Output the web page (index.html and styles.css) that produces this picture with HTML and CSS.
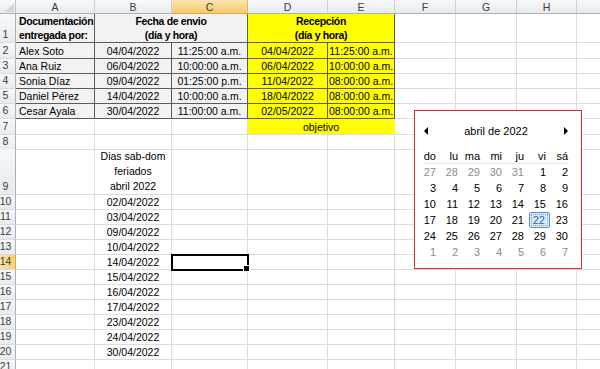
FILE: index.html
```html
<!doctype html>
<html lang="es">
<head>
    <meta charset="UTF-8">
    <title>Documentación - fechas de envío y recepción</title>
    <link rel="stylesheet" href="styles.css">
</head>
<body>
    <div class="sheet">
        <div class="row head">
            <div class="corner"></div>
            <div class="col">A</div>
            <div class="col">B</div>
            <div class="col active">C</div>
            <div class="col">D</div>
            <div class="col">E</div>
            <div class="col">F</div>
            <div class="col">G</div>
            <div class="col">H</div>
            <div class="col"></div>
        </div>

        <div class="row r1">
            <div class="num">1</div>
            <div class="cell tb gray bold left">Documentación<br>entregada por:</div>
            <div class="cell tb gray bold span2">Fecha de envio<br>(día y hora)</div>
            <div class="cell tb yellow bold span2">Recepción<br>(día y hora)</div>
            <div class="cell"></div>
            <div class="cell"></div>
            <div class="cell"></div>
            <div class="cell"></div>
        </div>
        <div class="row r2">
            <div class="num">2</div>
            <div class="cell tb gray left">Alex Soto</div>
            <div class="cell tb gray">04/04/2022</div>
            <div class="cell tb gray">11:25:00 a.m.</div>
            <div class="cell tb yellow">04/04/2022</div>
            <div class="cell tb yellow">11:25:00 a.m.</div>
            <div class="cell"></div>
            <div class="cell"></div>
            <div class="cell"></div>
            <div class="cell"></div>
        </div>
        <div class="row">
            <div class="num">3</div>
            <div class="cell tb gray left">Ana Ruiz</div>
            <div class="cell tb gray">06/04/2022</div>
            <div class="cell tb gray">10:00:00 a.m.</div>
            <div class="cell tb yellow">06/04/2022</div>
            <div class="cell tb yellow">10:00:00 a.m.</div>
            <div class="cell"></div>
            <div class="cell"></div>
            <div class="cell"></div>
            <div class="cell"></div>
        </div>
        <div class="row">
            <div class="num">4</div>
            <div class="cell tb gray left">Sonia Díaz</div>
            <div class="cell tb gray">09/04/2022</div>
            <div class="cell tb gray">01:25:00 p.m.</div>
            <div class="cell tb yellow">11/04/2022</div>
            <div class="cell tb yellow">08:00:00 a.m.</div>
            <div class="cell"></div>
            <div class="cell"></div>
            <div class="cell"></div>
            <div class="cell"></div>
        </div>
        <div class="row">
            <div class="num">5</div>
            <div class="cell tb gray left">Daniel Pérez</div>
            <div class="cell tb gray">14/04/2022</div>
            <div class="cell tb gray">10:00:00 a.m.</div>
            <div class="cell tb yellow">18/04/2022</div>
            <div class="cell tb yellow">08:00:00 a.m.</div>
            <div class="cell"></div>
            <div class="cell"></div>
            <div class="cell"></div>
            <div class="cell"></div>
        </div>
        <div class="row">
            <div class="num">6</div>
            <div class="cell tb gray left">Cesar Ayala</div>
            <div class="cell tb gray">30/04/2022</div>
            <div class="cell tb gray">11:00:00 a.m.</div>
            <div class="cell tb yellow">02/05/2022</div>
            <div class="cell tb yellow">08:00:00 a.m.</div>
            <div class="cell"></div>
            <div class="cell"></div>
            <div class="cell"></div>
            <div class="cell"></div>
        </div>
        <div class="row r7">
            <div class="num">7</div>
            <div class="cell"></div>
            <div class="cell"></div>
            <div class="cell"></div>
            <div class="cell yellow flat span2">objetivo</div>
            <div class="cell"></div>
            <div class="cell"></div>
            <div class="cell"></div>
            <div class="cell"></div>
        </div>
        <div class="row r8">
            <div class="num">8</div>
            <div class="cell"></div>
            <div class="cell"></div>
            <div class="cell"></div>
            <div class="cell"></div>
            <div class="cell"></div>
            <div class="cell"></div>
            <div class="cell"></div>
            <div class="cell"></div>
            <div class="cell"></div>
        </div>
        <div class="row r9">
            <div class="num">9</div>
            <div class="cell"></div>
            <div class="cell tall">Dias sab-dom<br>feriados<br>abril 2022</div>
            <div class="cell"></div>
            <div class="cell"></div>
            <div class="cell"></div>
            <div class="cell"></div>
            <div class="cell"></div>
            <div class="cell"></div>
            <div class="cell"></div>
        </div>
        <div class="row">
            <div class="num">10</div>
            <div class="cell"></div>
            <div class="cell">02/04/2022</div>
            <div class="cell"></div>
            <div class="cell"></div>
            <div class="cell"></div>
            <div class="cell"></div>
            <div class="cell"></div>
            <div class="cell"></div>
            <div class="cell"></div>
        </div>
        <div class="row">
            <div class="num">11</div>
            <div class="cell"></div>
            <div class="cell">03/04/2022</div>
            <div class="cell"></div>
            <div class="cell"></div>
            <div class="cell"></div>
            <div class="cell"></div>
            <div class="cell"></div>
            <div class="cell"></div>
            <div class="cell"></div>
        </div>
        <div class="row">
            <div class="num">12</div>
            <div class="cell"></div>
            <div class="cell">09/04/2022</div>
            <div class="cell"></div>
            <div class="cell"></div>
            <div class="cell"></div>
            <div class="cell"></div>
            <div class="cell"></div>
            <div class="cell"></div>
            <div class="cell"></div>
        </div>
        <div class="row">
            <div class="num">13</div>
            <div class="cell"></div>
            <div class="cell">10/04/2022</div>
            <div class="cell"></div>
            <div class="cell"></div>
            <div class="cell"></div>
            <div class="cell"></div>
            <div class="cell"></div>
            <div class="cell"></div>
            <div class="cell"></div>
        </div>
        <div class="row">
            <div class="num active">14</div>
            <div class="cell"></div>
            <div class="cell">14/04/2022</div>
            <div class="cell selected"></div>
            <div class="cell"></div>
            <div class="cell"></div>
            <div class="cell"></div>
            <div class="cell"></div>
            <div class="cell"></div>
            <div class="cell"></div>
        </div>
        <div class="row">
            <div class="num">15</div>
            <div class="cell"></div>
            <div class="cell">15/04/2022</div>
            <div class="cell"></div>
            <div class="cell"></div>
            <div class="cell"></div>
            <div class="cell"></div>
            <div class="cell"></div>
            <div class="cell"></div>
            <div class="cell"></div>
        </div>
        <div class="row">
            <div class="num">16</div>
            <div class="cell"></div>
            <div class="cell">16/04/2022</div>
            <div class="cell"></div>
            <div class="cell"></div>
            <div class="cell"></div>
            <div class="cell"></div>
            <div class="cell"></div>
            <div class="cell"></div>
            <div class="cell"></div>
        </div>
        <div class="row">
            <div class="num">17</div>
            <div class="cell"></div>
            <div class="cell">17/04/2022</div>
            <div class="cell"></div>
            <div class="cell"></div>
            <div class="cell"></div>
            <div class="cell"></div>
            <div class="cell"></div>
            <div class="cell"></div>
            <div class="cell"></div>
        </div>
        <div class="row">
            <div class="num">18</div>
            <div class="cell"></div>
            <div class="cell">23/04/2022</div>
            <div class="cell"></div>
            <div class="cell"></div>
            <div class="cell"></div>
            <div class="cell"></div>
            <div class="cell"></div>
            <div class="cell"></div>
            <div class="cell"></div>
        </div>
        <div class="row">
            <div class="num">19</div>
            <div class="cell"></div>
            <div class="cell">24/04/2022</div>
            <div class="cell"></div>
            <div class="cell"></div>
            <div class="cell"></div>
            <div class="cell"></div>
            <div class="cell"></div>
            <div class="cell"></div>
            <div class="cell"></div>
        </div>
        <div class="row">
            <div class="num">20</div>
            <div class="cell"></div>
            <div class="cell">30/04/2022</div>
            <div class="cell"></div>
            <div class="cell"></div>
            <div class="cell"></div>
            <div class="cell"></div>
            <div class="cell"></div>
            <div class="cell"></div>
            <div class="cell"></div>
        </div>
        <div class="row">
            <div class="num">21</div>
            <div class="cell"></div>
            <div class="cell"></div>
            <div class="cell"></div>
            <div class="cell"></div>
            <div class="cell"></div>
            <div class="cell"></div>
            <div class="cell"></div>
            <div class="cell"></div>
            <div class="cell"></div>
        </div>
    </div>

    <!-- selector de fecha flotante sobre la hoja -->
    <div class="picker">
        <div class="picker-title">
            <span class="arrow prev"></span>
            <span class="month">abril de 2022</span>
            <span class="arrow next"></span>
        </div>
        <div class="week">
            <div>do</div><div>lu</div><div>ma</div><div>mi</div><div>ju</div><div>vi</div><div>sá</div>
        </div>
        <div class="days">
            <div class="out">27</div><div class="out">28</div><div class="out">29</div><div class="out">30</div><div class="out">31</div><div>1</div><div>2</div>
            <div>3</div><div>4</div><div>5</div><div>6</div><div>7</div><div>8</div><div>9</div>
            <div>10</div><div>11</div><div>12</div><div>13</div><div>14</div><div>15</div><div>16</div>
            <div>17</div><div>18</div><div>19</div><div>20</div><div>21</div><div class="today">22</div><div>23</div>
            <div>24</div><div>25</div><div>26</div><div>27</div><div>28</div><div>29</div><div>30</div>
            <div class="out">1</div><div class="out">2</div><div class="out">3</div><div class="out">4</div><div class="out">5</div><div class="out">6</div><div class="out">7</div>
        </div>
    </div>
</body>
</html>
```

FILE: styles.css
```css
* {
    box-sizing: border-box;
}
body {
    margin: 0;
    width: 600px;
    height: 369px;
    overflow: hidden;
    position: relative;
    background: #fff;
    font-family: "Liberation Sans", Arial, sans-serif;
    font-size: 10.5px;
    color: #000;
}
.sheet {
    width: 637px;
}
.row {
    display: grid;
    grid-template-columns: 16px 79px 77px 76px 80px 67px 61px 61px 60px 60px;
    height: 15px;
}
.head { height: 14px; }
.r1 { height: 29px; }
.r2, .r7 { height: 16px; }
.r8 { height: 14px; }
.r9 { height: 46px; }

/* cabeceras */
.corner, .col, .num {
    background: linear-gradient(#f7f8fa, #e8ebef);
    color: #3c3c3c;
}
.corner {
    border-right: 1px solid #bcc3cc;
    border-bottom: 1px solid #a9b1bb;
    display: flex;
    align-items: flex-end;
    justify-content: flex-end;
    padding: 0 1px 1px 0;
}
.corner::after {
    content: "";
    border-left: 9px solid transparent;
    border-bottom: 9px solid #d3d7dc;
}
.col {
    border-right: 1px solid #ccd1d7;
    border-bottom: 1px solid #a9b1bb;
    display: flex;
    align-items: center;
    justify-content: center;
}
.col.active {
    background: linear-gradient(#fbe7b0, #f6c96a);
    border-bottom-color: #e8a33a;
    border-right-color: #e2b66c;
}
.num {
    border-right: 1px solid #a9b1bb;
    border-bottom: 1px solid #d8dce2;
    display: flex;
    align-items: flex-end;
    justify-content: center;
    padding: 0 4px 1px 0;
    line-height: 13px;
}
.num.active {
    background: linear-gradient(90deg, #fbe3a4, #f7cf78);
    border-right-color: #e8a33a;
}

/* celdas */
.cell {
    border-right: 1px solid #dcdcdc;
    border-bottom: 1px solid #dcdcdc;
    display: flex;
    align-items: flex-end;
    justify-content: center;
    text-align: center;
    padding: 0 3px 0;
    line-height: 14px;
    white-space: nowrap;
    overflow: hidden;
}
.span2 {
    grid-column: span 2;
}
.left {
    justify-content: flex-start;
    text-align: left;
}
.bold {
    font-weight: bold;
    letter-spacing: -0.35px;
}
.tb {
    border-color: #5c5c5c;
}
.gray {
    background: #f2f2f2;
}
.yellow {
    background: #ffff00;
}
.flat {
    border-right-color: #ffff00;
}
.tall {
    line-height: 15px;
}
.selected {
    position: relative;
    overflow: visible;
    outline: 2px solid #000;
    outline-offset: -1px;
}
.selected::after {
    content: "";
    position: absolute;
    right: -3px;
    bottom: -3px;
    width: 5px;
    height: 5px;
    background: #000;
    border: 1px solid #fff;
}

/* selector de fecha */
.picker {
    position: absolute;
    left: 414px;
    top: 110px;
    width: 168px;
    height: 159px;
    border: 1px solid #e3262b;
    background: #fff;
    padding-top: 13px;
    color: #000;
}
.picker-title {
    display: flex;
    align-items: center;
    justify-content: space-between;
    height: 14px;
    padding: 0 13px 0 9px;
    font-size: 11px;
}
.arrow {
    width: 0;
    height: 0;
    border-top: 4px solid transparent;
    border-bottom: 4px solid transparent;
}
.prev {
    border-right: 4px solid #000;
}
.next {
    border-left: 4px solid #000;
}
.week, .days {
    display: grid;
    grid-template-columns: repeat(7, 22px);
    text-align: right;
    font-size: 11px;
}
.week {
    margin-top: 11px;
    height: 15px;
    line-height: 14px;
    background: linear-gradient(#e4e4e4, #e4e4e4) no-repeat 8px 100% / 146px 1px;
}
.week div, .days div {
    padding-right: 1px;
}
.days div {
    height: 16px;
    line-height: 16px;
}
.days .out {
    color: #8c8c8c;
}
.days .today {
    margin: 0 -3px 0 4px;
    padding-right: 4px;
    border: 1px solid #5a8fd2;
    border-radius: 2px;
    background: #dcebfc;
    color: #2a62b8;
    line-height: 14px;
    outline: 1px dotted #7aa3d8;
    outline-offset: -3px;
}
```
